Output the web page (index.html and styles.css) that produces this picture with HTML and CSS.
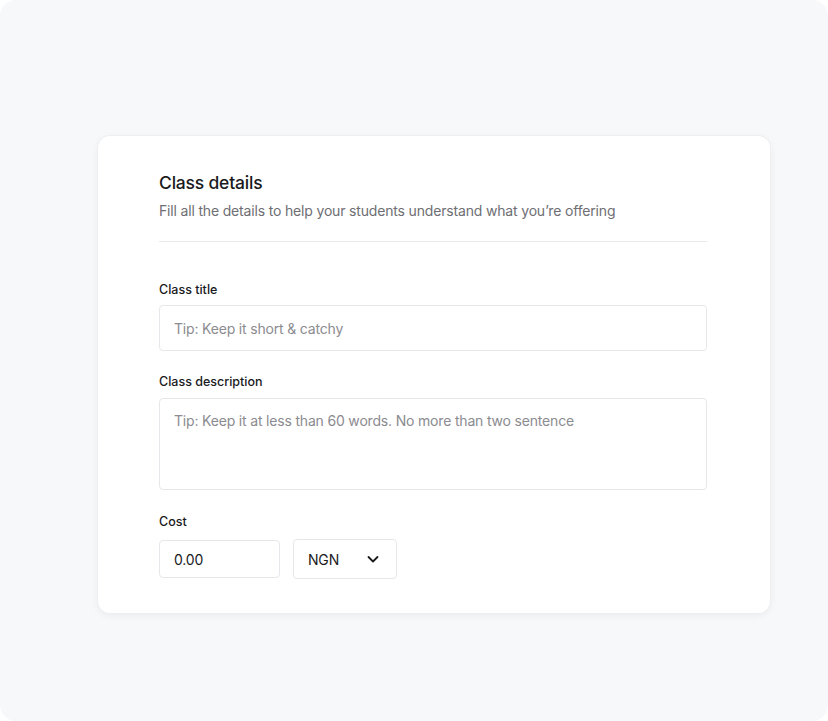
FILE: index.html
```html
<!DOCTYPE html>
<html>
<head>
<meta charset="utf-8">
<link rel="stylesheet" href="styles.css">
</head>
<body>
<div class="frame">
  <div class="card">
    <h1 class="title">Class details</h1>
    <p class="subtitle">Fill all the details to help your students understand what you’re offering</p>
    <div class="divider"></div>
    <label class="label first">Class title</label>
    <div class="input"><span class="ph">Tip: Keep it short &amp; catchy</span></div>
    <label class="label desc-label">Class description</label>
    <div class="textarea"><span class="ph">Tip: Keep it at less than 60 words. No more than two sentence</span></div>
    <label class="label cost-label">Cost</label>
    <div class="cost-row">
      <div class="cost-input">0.00</div>
      <div class="select">
        <span>NGN</span>
        <svg class="chev" width="14" height="14" viewBox="0 0 14 14"><path d="M2.5 5l4.5 4.5L11.5 5" fill="none" stroke="#1a1a1a" stroke-width="1.8" stroke-linecap="round" stroke-linejoin="round"/></svg>
      </div>
    </div>
  </div>
</div>
</body>
</html>
```
FILE: styles.css
```css
* { box-sizing: border-box; }
html, body { margin: 0; padding: 0; background: #ffffff; }
body { font-family: Inter, "Noto Sans", sans-serif; color: #1b1b1f; }
.frame {
  width: 828px;
  height: 721px;
  background: #f7f8fa;
  border-radius: 16px;
  padding: 136px 58px 0 98px;
}
.card {
  width: 672px;
  height: 477px;
  background: #ffffff;
  border-radius: 12px;
  box-shadow: 0 0 0 1px #eeeff1, 0 2px 8px rgba(20, 24, 40, 0.06);
  padding: 35px 63px 0 61px;
  display: flex;
  flex-direction: column;
}
.title {
  margin: 0;
  font-size: 17.5px;
  line-height: 24px;
  font-weight: 500;
  letter-spacing: -0.2px;
  color: #1a1a1d;
}
.subtitle {
  margin: 6px 0 0;
  font-size: 14px;
  line-height: 20px;
  letter-spacing: -0.17px;
  color: #6e6e73;
}
.divider {
  margin-top: 20px;
  height: 1px;
  background: #e9e9ec;
}
.label {
  display: block;
  font-size: 12.5px;
  line-height: 18px;
  font-weight: 500;
  color: #1a1a1d;
}
.label.first { margin-top: 39px; }
.label.desc-label { margin-top: 22px; }
.label.cost-label { margin-top: 23px; }
.input, .textarea, .cost-input, .select {
  border: 1px solid #e6e7ea;
  border-radius: 4px;
  background: #fff;
  font-size: 14px;
  letter-spacing: -0.18px;
}
.input {
  margin-top: 6px;
  height: 46px;
  padding: 0 14px;
  display: flex;
  align-items: center;
}
.textarea {
  margin-top: 7px;
  height: 92px;
  padding: 12px 14px;
  line-height: 20px;
}
.ph { color: #8b8b90; }
.cost-row {
  margin-top: 8px;
  display: flex;
  align-items: center;
  gap: 13px;
}
.cost-input {
  width: 121px;
  height: 38px;
  padding: 0 14px;
  display: flex;
  align-items: center;
  color: #1a1a1d;
}
.select {
  width: 104px;
  height: 40px;
  padding: 0 16px 0 14px;
  display: flex;
  align-items: center;
  justify-content: space-between;
  color: #1a1a1d;
}
.chev { display: block; }
```
